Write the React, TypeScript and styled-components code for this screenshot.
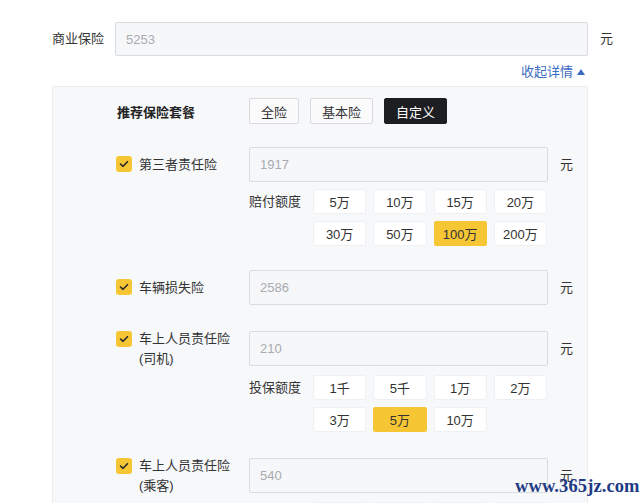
import React from "react";
import styled, { createGlobalStyle } from "styled-components";

const Global = createGlobalStyle`
  html, body { margin: 0; padding: 0; background: #ffffff; }
  body {
    font-family: "Liberation Sans", "Noto Sans CJK SC", sans-serif;
    font-size: 13px;
    color: #333333;
    -webkit-font-smoothing: antialiased;
  }
  * { box-sizing: border-box; }
`;

const Page = styled.div`
  position: relative;
  padding: 22px 0 0 52px;
  width: 640px;
  height: 503px;
  overflow: hidden;
`;

const TopRow = styled.div`
  display: grid;
  grid-template-columns: 63px 473px auto;
  align-items: center;
`;

const TopLabel = styled.div`
  line-height: 20px;
  color: #333;
`;

const Field = styled.div<{ $w?: number; $h: number }>`
  height: ${(p) => p.$h}px;
  width: ${(p) => (p.$w ? `${p.$w}px` : "auto")};
  border: 1px solid #d9dce1;
  border-radius: 2px;
  background: #f6f7f9;
  display: flex;
  align-items: center;
  padding-left: 10px;
  color: #a9abb0;
  font-size: 13px;
`;

const Unit = styled.div<{ $ml: number }>`
  margin-left: ${(p) => p.$ml}px;
  color: #333;
  line-height: 20px;
`;

const ToggleRow = styled.div`
  width: 536px;
  margin-top: 8px;
  display: flex;
  justify-content: flex-end;
  padding-right: 3px;
`;

const ToggleLink = styled.a`
  display: flex;
  align-items: center;
  gap: 4px;
  line-height: 16px;
  color: #3b6cc0;
  font-size: 13px;
  cursor: pointer;
`;

const Caret = styled.span`
  width: 0;
  height: 0;
  border-left: 4px solid transparent;
  border-right: 4px solid transparent;
  border-bottom: 6px solid #3b6cc0;
  margin-top: -1px;
`;

const Panel = styled.div`
  margin-top: 6px;
  width: 536px;
  min-height: 600px;
  background: #f7f8fa;
  border: 1px solid #eceef2;
  border-radius: 2px;
  padding: 11px 0 0 63px;
`;

const PlanRow = styled.div`
  display: flex;
  align-items: center;
  height: 26px;
`;

const PlanTitle = styled.div`
  width: 133px;
  padding-left: 1px;
  font-weight: 700;
  color: #222;
`;

const PlanButtons = styled.div`
  display: flex;
  gap: 11px;
`;

const PlanButton = styled.div<{ $active?: boolean }>`
  height: 26px;
  padding: 0 11px;
  display: flex;
  align-items: center;
  border: 1px solid ${(p) => (p.$active ? "#1d1e22" : "#d8dadf")};
  background: ${(p) => (p.$active ? "#1d1e22" : "#fbfbfc")};
  color: ${(p) => (p.$active ? "#ffffff" : "#333")};
  border-radius: 2px;
`;

const Items = styled.div`
  margin-top: 23px;
  display: flex;
  flex-direction: column;
  gap: 24px;
`;

const Item = styled.div`
  display: flex;
  flex-direction: column;
`;

const ItemHead = styled.div`
  display: flex;
  align-items: center;
`;

const ItemLabel = styled.div`
  width: 133px;
  display: flex;
  align-items: flex-start;
  gap: 7px;
`;

const CheckBox = styled.span`
  width: 16px;
  height: 16px;
  margin-top: 1.5px;
  border-radius: 3px;
  background: #f7c634;
  display: flex;
  align-items: center;
  justify-content: center;
  flex: none;
`;

const ItemName = styled.div`
  line-height: 19.5px;
  color: #333;
`;

const Options = styled.div`
  margin-top: 7px;
  margin-left: 133px;
  display: flex;
  align-items: flex-start;
`;

const OptLabel = styled.div`
  width: 64px;
  line-height: 25px;
  color: #333;
`;

const OptGrid = styled.div`
  width: 234px;
  display: grid;
  grid-template-columns: repeat(4, 1fr);
  gap: 7px;
`;

const OptButton = styled.div<{ $active?: boolean }>`
  height: 25px;
  display: flex;
  align-items: center;
  justify-content: center;
  background: ${(p) => (p.$active ? "#f7c634" : "#ffffff")};
  border: 1px solid ${(p) => (p.$active ? "#f7c634" : "#eef0f3")};
  border-radius: 2px;
  color: #333;
`;

const Watermark = styled.div`
  position: absolute;
  left: 515px;
  top: 476px;
  font-family: "Liberation Serif", "DejaVu Serif", serif;
  font-size: 18.5px;
  font-weight: 700;
  color: #1f3b86;
  letter-spacing: 0.1px;
`;

const Check = () => (
  <svg width="10" height="8" viewBox="0 0 10 8">
    <path d="M1.5 4 L4 6.3 L8.5 1.7" fill="none" stroke="#2a2a2a" strokeWidth="1.6" strokeLinecap="round" strokeLinejoin="round" />
  </svg>
);

type Opt = { label: string; values: string[]; active: string };
type Ins = { name: string[]; value: string; opt?: Opt };

const seatOpts = (active: string): Opt => ({
  label: "投保额度",
  values: ["1千", "5千", "1万", "2万", "3万", "5万", "10万"],
  active,
});

const items: Ins[] = [
  {
    name: ["第三者责任险"],
    value: "1917",
    opt: {
      label: "赔付额度",
      values: ["5万", "10万", "15万", "20万", "30万", "50万", "100万", "200万"],
      active: "100万",
    },
  },
  { name: ["车辆损失险"], value: "2586" },
  { name: ["车上人员责任险", "(司机)"], value: "210", opt: seatOpts("5万") },
  { name: ["车上人员责任险", "(乘客)"], value: "540", opt: seatOpts("5万") },
];

export default function App() {
  return (
    <>
      <Global />
      <Page>
        <TopRow>
          <TopLabel>商业保险</TopLabel>
          <Field $h={34}>5253</Field>
          <Unit $ml={12}>元</Unit>
        </TopRow>
        <ToggleRow>
          <ToggleLink>
            收起详情
            <Caret />
          </ToggleLink>
        </ToggleRow>
        <Panel>
          <PlanRow>
            <PlanTitle>推荐保险套餐</PlanTitle>
            <PlanButtons>
              <PlanButton>全险</PlanButton>
              <PlanButton>基本险</PlanButton>
              <PlanButton $active>自定义</PlanButton>
            </PlanButtons>
          </PlanRow>
          <Items>
            {items.map((it) => (
              <Item key={it.name.join("")}>
                <ItemHead>
                  <ItemLabel>
                    <CheckBox>
                      <Check />
                    </CheckBox>
                    <ItemName>
                      {it.name.map((l) => (
                        <div key={l}>{l}</div>
                      ))}
                    </ItemName>
                  </ItemLabel>
                  <Field $w={299} $h={35}>{it.value}</Field>
                  <Unit $ml={12}>元</Unit>
                </ItemHead>
                {it.opt && (
                  <Options>
                    <OptLabel>{it.opt.label}</OptLabel>
                    <OptGrid>
                      {it.opt.values.map((v) => (
                        <OptButton key={v} $active={v === it.opt!.active}>
                          {v}
                        </OptButton>
                      ))}
                    </OptGrid>
                  </Options>
                )}
              </Item>
            ))}
          </Items>
        </Panel>
        <Watermark>www.365jz.com</Watermark>
      </Page>
    </>
  );
}
